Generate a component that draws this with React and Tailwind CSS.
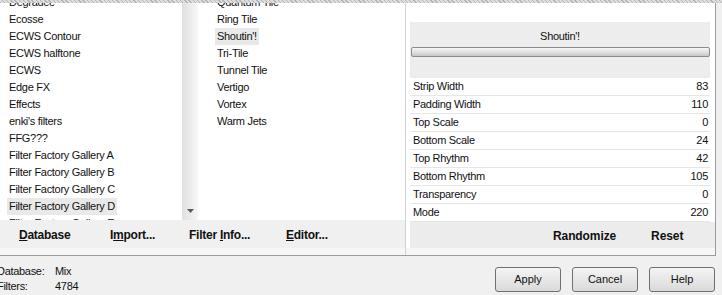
import React from 'react';

const categories = [
  'Degradee',
  'Ecosse',
  'ECWS Contour',
  'ECWS halftone',
  'ECWS',
  'Edge FX',
  'Effects',
  "enki's filters",
  'FFG???',
  'Filter Factory Gallery A',
  'Filter Factory Gallery B',
  'Filter Factory Gallery C',
  'Filter Factory Gallery D',
  'Filter Factory Gallery E',
];

const filters = [
  'Quantum Tile',
  'Ring Tile',
  "Shoutin'!",
  'Tri-Tile',
  'Tunnel Tile',
  'Vertigo',
  'Vortex',
  'Warm Jets',
];

const params = [
  ['Strip Width', 83],
  ['Padding Width', 110],
  ['Top Scale', 0],
  ['Bottom Scale', 24],
  ['Top Rhythm', 42],
  ['Bottom Rhythm', 105],
  ['Transparency', 0],
  ['Mode', 220],
];

// one row of a list box, selected rows get a grey pill behind the text
const ListRow = ({ label, selected }) => (
  <div className="h-[17px] flex items-center">
    <span
      className={
        'px-[2px] leading-[17px] whitespace-nowrap ' +
        (selected ? 'bg-[#e9e9e9]' : '')
      }
    >
      {label}
    </span>
  </div>
);

const ToolButton = ({ children, width }) => (
  <div className={'font-bold text-[12px] text-[#111] ' + width}>{children}</div>
);

const DialogButton = ({ label }) => (
  <button className="w-[66px] h-[25px] rounded-[3px] border border-[#707070] bg-gradient-to-b from-[#f4f4f4] to-[#dadada] text-[11px] text-[#111]">
    {label}
  </button>
);

const App = () => {
  return (
    <div className="w-[722px] h-[295px] overflow-hidden bg-[#f0f0f0] font-['Liberation_Sans',Arial,sans-serif] text-[11px] tracking-[-0.3px] text-[#111]">
      {/* dotted strip left over from the window above */}
      <div className="h-[3px] bg-[repeating-linear-gradient(45deg,#b4b4b4_0px,#b4b4b4_1px,#dedede_1px,#dedede_3px)]" />

      {/* main frame */}
      <div className="flex w-[716px] h-[253px] border-r border-b border-[#9c9c9c]">
        {/* left: the two lists and the toolbar */}
        <div className="w-[405px] flex flex-col">
          <div className="flex h-[217px]">
            <div className="w-[182px] bg-white overflow-hidden">
              <div className="-mt-[9px] pl-[7px]">
                {categories.map((c) => (
                  <ListRow key={c} label={c} selected={c === 'Filter Factory Gallery D'} />
                ))}
              </div>
            </div>
            <div className="w-[16px] flex flex-col justify-end items-center pb-[7px] bg-gradient-to-r from-[#e0e0e0] via-[#ebebeb] to-[#f7f7f7]">
              <svg width="7" height="4" viewBox="0 0 7 4">
                <polygon points="0,0 7,0 3.5,4" fill="#5a5a5a" />
              </svg>
            </div>
            <div className="flex-1 bg-white overflow-hidden">
              <div className="-mt-[9px] pl-[17px]">
                {filters.map((f) => (
                  <ListRow key={f} label={f} selected={f === "Shoutin'!"} />
                ))}
              </div>
            </div>
          </div>
          <div className="h-[28px] flex items-center pt-[2px] pl-[19px] tracking-[-0.25px]">
            <ToolButton width="w-[91px]">
              <u>D</u>atabase
            </ToolButton>
            <ToolButton width="w-[79px]">
              I<u>m</u>port...
            </ToolButton>
            <ToolButton width="w-[97px]">
              Filter <u>I</u>nfo...
            </ToolButton>
            <ToolButton width="w-[60px]">
              <u>E</u>ditor...
            </ToolButton>
          </div>
          <div className="flex-1 bg-[#f6f6f6]" />
        </div>

        {/* right: parameters of the selected filter */}
        <div className="flex-1 flex flex-col border-l border-[#d2d2d2] bg-white">
          <div className="pl-[4px] pr-[5px] flex flex-col">
            <div className="h-[19px]" />
            <div className="h-[56px] bg-[#ededed] flex flex-col">
              <div className="pt-[7px] leading-[14px] text-center">Shoutin'!</div>
              <div className="mt-[4px] ml-[1px] h-[10px] rounded-[2px] border border-[#8a8a8a] bg-gradient-to-b from-[#f6f6f6] via-[#e2e2e2] to-[#c6c6c6]" />
            </div>
            {params.map(([label, value]) => (
              <div
                key={label}
                className="h-[18px] flex items-center justify-between pl-[3px] pr-[2px] border-b border-[#e6e6e6] bg-white"
              >
                <span>{label}</span>
                <span>{value}</span>
              </div>
            ))}
          </div>
          <div className="h-[26px] ml-[4px] bg-[#ececec] flex items-center pt-[2px] pl-[143px] gap-[35px] text-[12px] font-bold tracking-[-0.1px]">
            <span>Randomize</span>
            <span>Reset</span>
          </div>
          <div className="flex-1 bg-[#f6f6f6]" />
        </div>
      </div>

      {/* status line and dialog buttons */}
      <div className="flex h-[39px]">
        <div className="-ml-[3px] pt-[9px] leading-[13px] grid grid-cols-[58px_auto]">
          <span>Database:</span>
          <span>Mix</span>
          <span>Filters:</span>
          <span>4784</span>
        </div>
        <div className="ml-auto mr-[7px] pt-[11px] flex gap-[11px] tracking-normal">
          <DialogButton label="Apply" />
          <DialogButton label="Cancel" />
          <DialogButton label="Help" />
        </div>
      </div>
    </div>
  );
};

export default App;
